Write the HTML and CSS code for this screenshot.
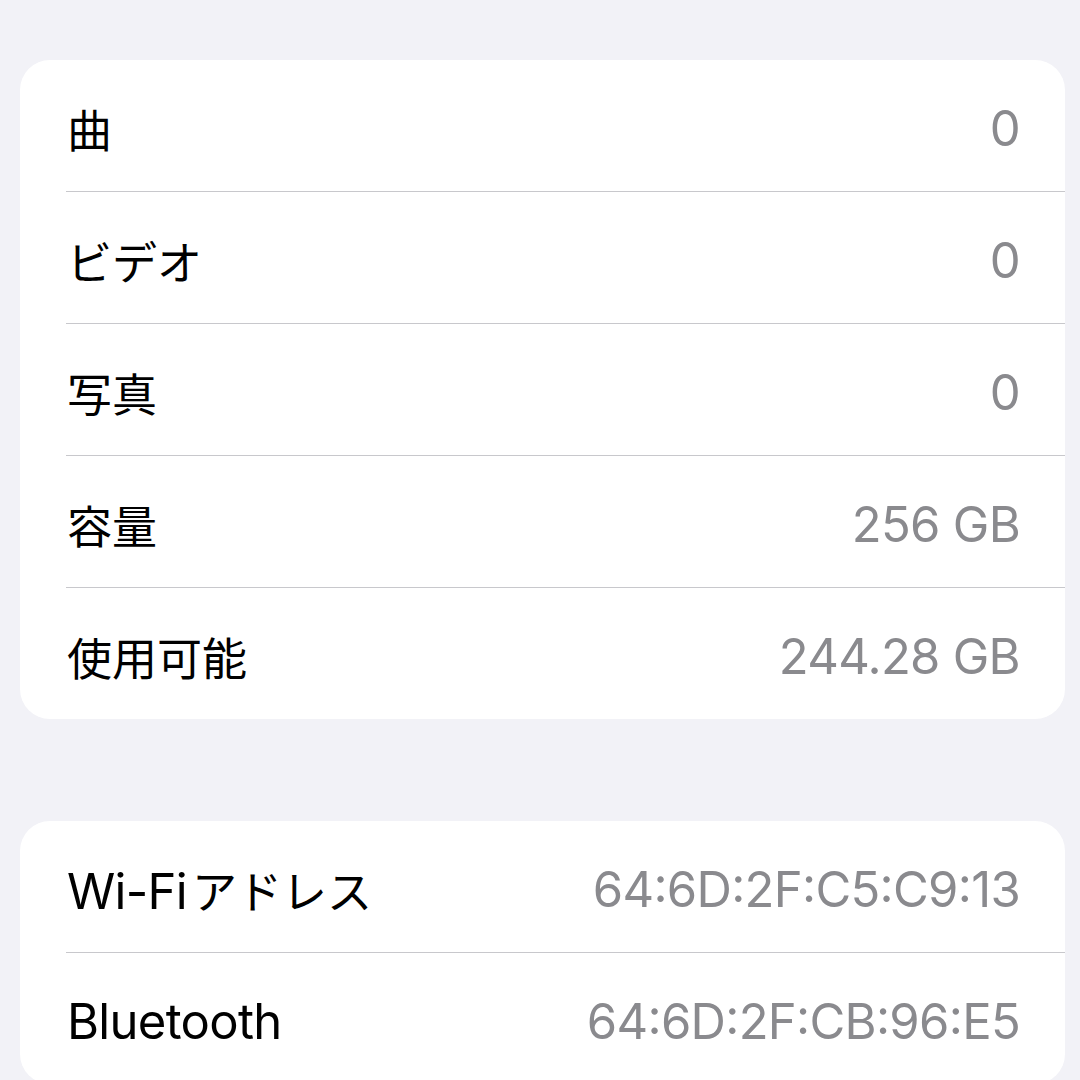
FILE: index.html
```html
<!DOCTYPE html>
<html lang="ja">
<head>
    <meta charset="UTF-8">
    <meta name="viewport" content="width=device-width, initial-scale=1.0">
    <title>情報</title>
    <link rel="stylesheet" href="styles.css">
</head>
<body>
<div class="page">
    <ul class="group">
        <li class="row"><span class="label ja">曲</span><span class="value">0</span></li>
        <li class="row"><span class="label ja">ビデオ</span><span class="value">0</span></li>
        <li class="row"><span class="label ja">写真</span><span class="value">0</span></li>
        <li class="row"><span class="label ja">容量</span><span class="value">256 GB</span></li>
        <li class="row"><span class="label ja">使用可能</span><span class="value">244.28 GB</span></li>
    </ul>
    <ul class="group">
        <li class="row"><span class="label">Wi-Fi<span class="ja suffix">アドレス</span></span><span class="value">64:6D:2F:C5:C9:13</span></li>
        <li class="row"><span class="label">Bluetooth</span><span class="value">64:6D:2F:CB:96:E5</span></li>
    </ul>
</div>
</body>
</html>
```

FILE: styles.css
```css
body {
    margin: 0;
    background: #f2f2f7;
    font-family: 'Inter', 'Noto Sans CJK JP', sans-serif;
    color: #000;
    overflow: hidden;
}
.page {
    padding: 60px 15px 0 20px;
    display: flex;
    flex-direction: column;
    gap: 102px;
}
.group {
    list-style: none;
    margin: 0;
    padding: 0 0 0 46px;
    background: #fff;
    border-radius: 30px;
}
.row {
    height: 131px;
    display: flex;
    align-items: center;
    justify-content: space-between;
    padding: 6px 45px 0 0;
    box-sizing: border-box;
    font-size: 49px;
    letter-spacing: -0.7px;
}
.row + .row {
    border-top: 1px solid #c8c8cc;
    height: 132px;
}
.label {
    padding-left: 1px;
}
.ja {
    font-family: 'Noto Sans CJK JP', sans-serif;
    font-size: 45px;
    letter-spacing: 0;
}
.suffix {
    margin-left: 5px;
}
.value {
    color: #8a8a8e;
    font-feature-settings: "case";
}
```
